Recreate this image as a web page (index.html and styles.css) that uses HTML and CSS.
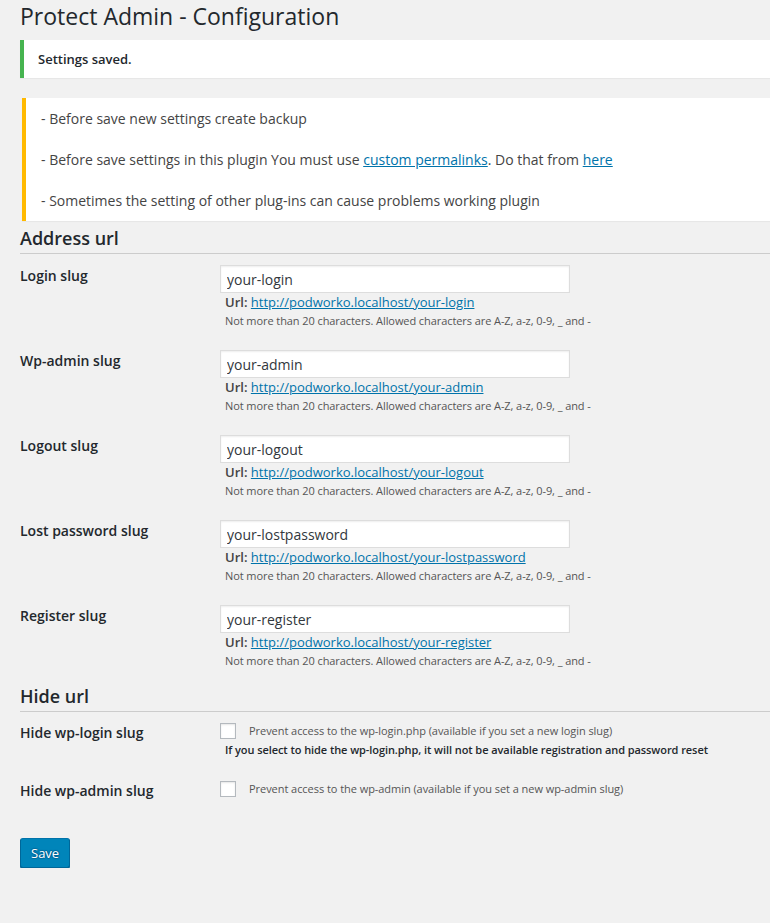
FILE: index.html
```html
<!DOCTYPE html>
<html lang="en">
<head>
<meta charset="utf-8">
<title>Protect Admin - Configuration</title>
<link rel="stylesheet" href="styles.css">
</head>
<body>
<div class="wrap">
  <h1 class="page-title">Protect Admin - Configuration</h1>

  <div class="notice notice-success">
    <p><strong>Settings saved.</strong></p>
  </div>

  <div class="notice notice-warning">
    <p>- Before save new settings create backup</p>
    <p>- Before save settings in this plugin You must use <a href="#">custom permalinks</a>. Do that from <a href="#">here</a></p>
    <p>- Sometimes the setting of other plug-ins can cause problems working plugin</p>
  </div>

  <h2 class="section-title">Address url</h2>

  <div class="form-row">
    <div class="row-label">Login slug</div>
    <div class="row-field">
      <input class="text-input" type="text" value="your-login">
      <div class="url-line"><strong>Url:</strong> <a href="#">http://podworko.localhost/your-login</a></div>
      <div class="desc">Not more than 20 characters. Allowed characters are A-Z, a-z, 0-9, _ and -</div>
    </div>
  </div>

  <div class="form-row">
    <div class="row-label">Wp-admin slug</div>
    <div class="row-field">
      <input class="text-input" type="text" value="your-admin">
      <div class="url-line"><strong>Url:</strong> <a href="#">http://podworko.localhost/your-admin</a></div>
      <div class="desc">Not more than 20 characters. Allowed characters are A-Z, a-z, 0-9, _ and -</div>
    </div>
  </div>

  <div class="form-row">
    <div class="row-label">Logout slug</div>
    <div class="row-field">
      <input class="text-input" type="text" value="your-logout">
      <div class="url-line"><strong>Url:</strong> <a href="#">http://podworko.localhost/your-logout</a></div>
      <div class="desc">Not more than 20 characters. Allowed characters are A-Z, a-z, 0-9, _ and -</div>
    </div>
  </div>

  <div class="form-row">
    <div class="row-label">Lost password slug</div>
    <div class="row-field">
      <input class="text-input" type="text" value="your-lostpassword">
      <div class="url-line"><strong>Url:</strong> <a href="#">http://podworko.localhost/your-lostpassword</a></div>
      <div class="desc">Not more than 20 characters. Allowed characters are A-Z, a-z, 0-9, _ and -</div>
    </div>
  </div>

  <div class="form-row">
    <div class="row-label">Register slug</div>
    <div class="row-field">
      <input class="text-input" type="text" value="your-register">
      <div class="url-line"><strong>Url:</strong> <a href="#">http://podworko.localhost/your-register</a></div>
      <div class="desc">Not more than 20 characters. Allowed characters are A-Z, a-z, 0-9, _ and -</div>
    </div>
  </div>

  <h2 class="section-title">Hide url</h2>

  <div class="form-row check-row">
    <div class="row-label">Hide wp-login slug</div>
    <div class="row-field">
      <label class="check-line"><span class="checkbox"></span><span class="check-text">Prevent access to the wp-login.php (available if you set a new login slug)</span></label>
      <div class="note">If you select to hide the wp-login.php, it will not be available registration and password reset</div>
    </div>
  </div>

  <div class="form-row check-row">
    <div class="row-label">Hide wp-admin slug</div>
    <div class="row-field">
      <label class="check-line"><span class="checkbox"></span><span class="check-text">Prevent access to the wp-admin (available if you set a new wp-admin slug)</span></label>
    </div>
  </div>

  <div class="submit">
    <button class="button-primary" type="button">Save</button>
  </div>
</div>
</body>
</html>
```

FILE: styles.css
```css
html, body {
  margin: 0;
  padding: 0;
  background: #f1f1f1;
}

body {
  font-family: "Open Sans", "Liberation Sans", sans-serif;
  font-size: 13px;
  line-height: 1.4;
  color: #444;
  overflow: hidden;
}

.wrap {
  margin-left: 20px;
}

.page-title {
  margin: 0;
  padding: 2px 0 4px;
  font-size: 23px;
  font-weight: 400;
  line-height: 29px;
  color: #23282d;
}

.notice {
  background: #fff;
  box-shadow: 0 1px 1px rgba(0, 0, 0, 0.04);
}

.notice p {
  margin: 0;
}

.notice-success {
  margin-top: 5px;
  border-left: 4px solid #46b450;
  padding: 9px 14px 8px;
}

.notice-success p {
  font-size: 13px;
  line-height: 21px;
  color: #23282d;
}

.notice-success strong {
  font-weight: 600;
}

.notice-warning {
  margin: 20px 0 0 2px;
  border-left: 4px solid #ffb900;
  padding: 10px 15px 10px;
}

.notice-warning p {
  font-size: 14px;
  line-height: 21px;
  color: #444;
  margin-bottom: 20px;
}

.notice-warning p:last-child {
  margin-bottom: 0;
}

a {
  color: #0073aa;
  text-decoration: underline;
}

.section-title {
  margin: 6px 0 0;
  padding: 0 0 3px;
  font-size: 18px;
  font-weight: 600;
  line-height: 23px;
  color: #23282d;
  border-bottom: 1px solid #ccc;
}

.form-row {
  display: grid;
  grid-template-columns: 200px 1fr;
  padding: 11px 0 10px;
}

.row-label {
  padding-top: 2px;
  font-size: 14px;
  font-weight: 600;
  line-height: 18px;
  color: #23282d;
}

.text-input {
  display: block;
  box-sizing: border-box;
  width: 350px;
  height: 28px;
  margin: 0;
  padding: 0 6px;
  border: 1px solid #ddd;
  background: #fff;
  box-shadow: inset 0 1px 2px rgba(0, 0, 0, 0.07);
  font-family: inherit;
  font-size: 14px;
  color: #32373c;
  outline: none;
}

.url-line {
  padding-left: 5px;
  font-size: 13px;
  line-height: 19px;
  color: #444;
}

.url-line strong {
  font-weight: 600;
}

.desc {
  padding-left: 5px;
  font-size: 11px;
  line-height: 17px;
  letter-spacing: -0.08px;
  color: #555;
}

.check-row {
  padding: 11px 0 12px;
}

.check-row .row-label {
  padding-top: 1px;
}

.check-line {
  display: flex;
  align-items: center;
  height: 16px;
}

.checkbox {
  flex: none;
  box-sizing: border-box;
  width: 16px;
  height: 16px;
  border: 1px solid #b4b9be;
  background: #fff;
  box-shadow: inset 0 1px 2px rgba(0, 0, 0, 0.1);
  margin-right: 13px;
}

.check-text {
  font-size: 11px;
  letter-spacing: -0.05px;
  color: #555;
}

.note {
  margin-top: 2px;
  padding-left: 5px;
  font-size: 11px;
  font-weight: 600;
  line-height: 17px;
  letter-spacing: -0.07px;
  color: #23282d;
}

.submit {
  padding-top: 26px;
}

.button-primary {
  box-sizing: border-box;
  height: 30px;
  padding: 0 10px 1px;
  border: 1px solid;
  border-color: #0073aa #006799 #006799;
  border-radius: 3px;
  background: #0085ba;
  box-shadow: 0 1px 0 #006799;
  color: #fff;
  font-family: inherit;
  font-size: 13px;
  line-height: 26px;
  text-shadow: 0 -1px 1px #006799, 1px 0 1px #006799, 0 1px 1px #006799, -1px 0 1px #006799;
  cursor: pointer;
}
```
